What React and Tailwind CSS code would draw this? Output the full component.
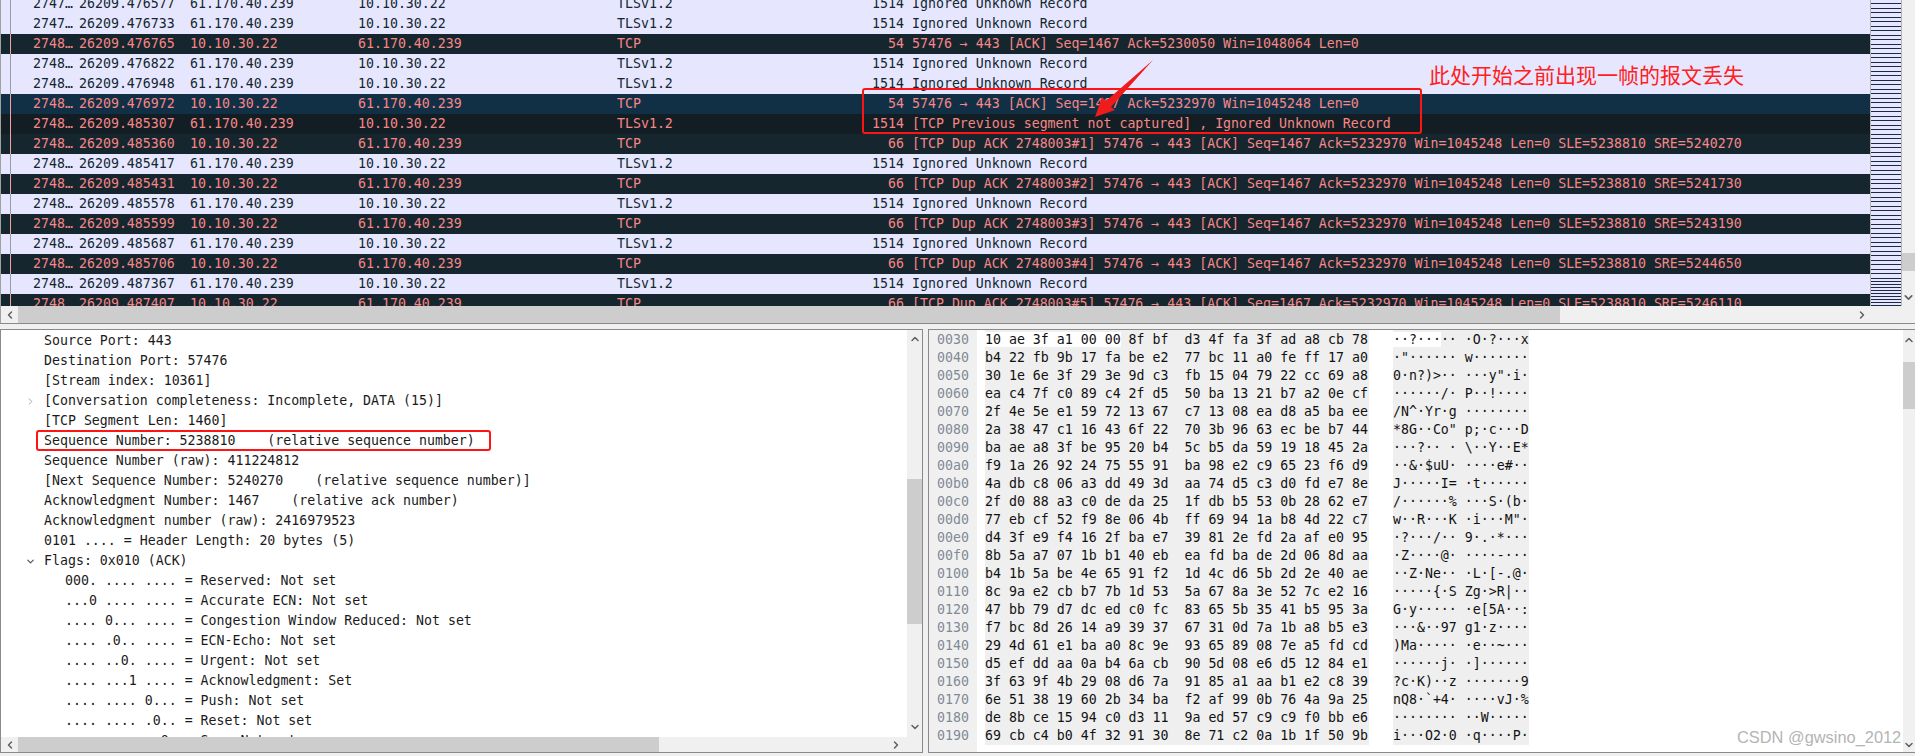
import { ChevronLeft, ChevronRight, ChevronUp, ChevronDown } from 'lucide-react';

const IGN = 'Ignored Unknown Record';
const dup = (n, sre) => `[TCP Dup ACK 2748003#${n}] 57476 → 443 [ACK] Seq=1467 Ack=5232970 Win=1045248 Len=0 SLE=5238810 SRE=${sre}`;
const IN = ['61.170.40.239', '10.10.30.22', 'TLSv1.2', '1514'];
const OUT = ['10.10.30.22', '61.170.40.239', 'TCP'];

const packets = [
  { no: '2747…', time: '26209.476577', p: IN, info: IGN },
  { no: '2747…', time: '26209.476733', p: IN, info: IGN },
  { no: '2748…', time: '26209.476765', p: OUT, len: '54', info: '57476 → 443 [ACK] Seq=1467 Ack=5230050 Win=1048064 Len=0' },
  { no: '2748…', time: '26209.476822', p: IN, info: IGN },
  { no: '2748…', time: '26209.476948', p: IN, info: IGN },
  { no: '2748…', time: '26209.476972', p: OUT, len: '54', info: '57476 → 443 [ACK] Seq=1467 Ack=5232970 Win=1045248 Len=0', bg: 'bg-[#123045]' },
  { no: '2748…', time: '26209.485307', p: IN, info: '[TCP Previous segment not captured] , Ignored Unknown Record', bad: true, bg: 'bg-[#121e24]' },
  { no: '2748…', time: '26209.485360', p: OUT, len: '66', info: dup(1, 5240270) },
  { no: '2748…', time: '26209.485417', p: IN, info: IGN },
  { no: '2748…', time: '26209.485431', p: OUT, len: '66', info: dup(2, 5241730) },
  { no: '2748…', time: '26209.485578', p: IN, info: IGN },
  { no: '2748…', time: '26209.485599', p: OUT, len: '66', info: dup(3, 5243190) },
  { no: '2748…', time: '26209.485687', p: IN, info: IGN },
  { no: '2748…', time: '26209.485706', p: OUT, len: '66', info: dup(4, 5244650) },
  { no: '2748…', time: '26209.487367', p: IN, info: IGN },
  { no: '2748…', time: '26209.487407', p: OUT, len: '66', info: dup(5, 5246110) },
];

const tree = [
  { t: 'Source Port: 443' },
  { t: 'Destination Port: 57476' },
  { t: '[Stream index: 10361]' },
  { t: '[Conversation completeness: Incomplete, DATA (15)]', arrow: 'right' },
  { t: '[TCP Segment Len: 1460]' },
  { t: 'Sequence Number: 5238810    (relative sequence number)' },
  { t: 'Sequence Number (raw): 411224812' },
  { t: '[Next Sequence Number: 5240270    (relative sequence number)]' },
  { t: 'Acknowledgment Number: 1467    (relative ack number)' },
  { t: 'Acknowledgment number (raw): 2416979523' },
  { t: '0101 .... = Header Length: 20 bytes (5)' },
  { t: 'Flags: 0x010 (ACK)', arrow: 'down' },
  { t: '000. .... .... = Reserved: Not set', sub: true },
  { t: '...0 .... .... = Accurate ECN: Not set', sub: true },
  { t: '.... 0... .... = Congestion Window Reduced: Not set', sub: true },
  { t: '.... .0.. .... = ECN-Echo: Not set', sub: true },
  { t: '.... ..0. .... = Urgent: Not set', sub: true },
  { t: '.... ...1 .... = Acknowledgment: Set', sub: true },
  { t: '.... .... 0... = Push: Not set', sub: true },
  { t: '.... .... .0.. = Reset: Not set', sub: true },
  { t: '.... .... ..0. = Syn: Not set', sub: true },
];

const hex = `10 ae 3f a1 00 00 8f bf d3 4f fa 3f ad a8 cb 78
b4 22 fb 9b 17 fa be e2 77 bc 11 a0 fe ff 17 a0
30 1e 6e 3f 29 3e 9d c3 fb 15 04 79 22 cc 69 a8
ea c4 7f c0 89 c4 2f d5 50 ba 13 21 b7 a2 0e cf
2f 4e 5e e1 59 72 13 67 c7 13 08 ea d8 a5 ba ee
2a 38 47 c1 16 43 6f 22 70 3b 96 63 ec be b7 44
ba ae a8 3f be 95 20 b4 5c b5 da 59 19 18 45 2a
f9 1a 26 92 24 75 55 91 ba 98 e2 c9 65 23 f6 d9
4a db c8 06 a3 dd 49 3d aa 74 d5 c3 d0 fd e7 8e
2f d0 88 a3 c0 de da 25 1f db b5 53 0b 28 62 e7
77 eb cf 52 f9 8e 06 4b ff 69 94 1a b8 4d 22 c7
d4 3f e9 f4 16 2f ba e7 39 81 2e fd 2a af e0 95
8b 5a a7 07 1b b1 40 eb ea fd ba de 2d 06 8d aa
b4 1b 5a be 4e 65 91 f2 1d 4c d6 5b 2d 2e 40 ae
8c 9a e2 cb b7 7b 1d 53 5a 67 8a 3e 52 7c e2 16
47 bb 79 d7 dc ed c0 fc 83 65 5b 35 41 b5 95 3a
f7 bc 8d 26 14 a9 39 37 67 31 0d 7a 1b a8 b5 e3
29 4d 61 e1 ba a0 8c 9e 93 65 89 08 7e a5 fd cd
d5 ef dd aa 0a b4 6a cb 90 5d 08 e6 d5 12 84 e1
3f 63 9f 4b 29 08 d6 7a 91 85 a1 aa b1 e2 c8 39
6e 51 38 19 60 2b 34 ba f2 af 99 0b 76 4a 9a 25
de 8b ce 15 94 c0 d3 11 9a ed 57 c9 c9 f0 bb e6
69 cb c4 b0 4f 32 91 30 8e 71 c2 0a 1b 1f 50 9b`.split('\n');

const toAscii = (bytes) =>
  bytes
    .map((b) => {
      const c = parseInt(b, 16);
      return c >= 32 && c < 127 ? String.fromCharCode(c) : '·';
    })
    .join('');

function PacketRow({ row }) {
  const [src, dst, proto, defLen] = row.p;
  const dark = row.p === OUT || row.bad;
  const bg = row.bg || (dark ? 'bg-[#15262e]' : 'bg-[#e6e6ff]');
  return (
    <div className={`flex h-5 leading-5 whitespace-pre ${bg} ${dark ? 'text-[#f78787]' : 'text-[#12272e]'}`}>
      <div className="w-[9px]" />
      <div className={`w-px ${dark ? 'bg-[#f7a0a0]' : 'bg-[#9a9aa8]'}`} />
      <div className="w-[22px]" />
      <div className="w-[46px]">{row.no}</div>
      <div className="w-[111px]">{row.time}</div>
      <div className="w-[168px]">{src}</div>
      <div className="w-[259px]">{dst}</div>
      <div className="w-[255px]">{proto}</div>
      <div className="w-[32px] text-right">{row.len || defLen}</div>
      <div className="ml-2">{row.info}</div>
    </div>
  );
}

function TreeRow({ row }) {
  return (
    <div className="flex h-5 items-center leading-5 whitespace-pre text-[#1a1a1a]">
      <div className="flex w-[43px] shrink-0 justify-end pr-2">
        {row.arrow === 'right' && <ChevronRight size={11} strokeWidth={2} className="text-[#a0a0a0]" />}
        {row.arrow === 'down' && <ChevronDown size={11} strokeWidth={2.5} className="text-[#505050]" />}
      </div>
      <div className={row.sub ? 'pl-[21px]' : ''}>{row.t}</div>
    </div>
  );
}

function HexRows() {
  return (
    <div className="flex min-h-full text-[#111] leading-[18px] whitespace-pre">
      <div className="w-[48px] bg-[#f0f0f0] pl-2 pt-px text-[#7f8a96]">
        {hex.map((_, i) => (
          <div key={i} className="h-[18px]">{(0x30 + i * 16).toString(16).padStart(4, '0')}</div>
        ))}
      </div>
      <div className="ml-2 h-fit w-[384px] bg-[#efefef] pt-px">
        {hex.map((line, i) => {
          const b = line.split(' ');
          const a = b.slice(0, 8).join(' ');
          const c = b.slice(8).join(' ');
          if (i === 0) {
            return (
              <div key={i} className="h-[18px]">
                <span className="bg-white">{b.slice(0, 6).join(' ')}</span> {b.slice(6, 8).join(' ')}  {c}
              </div>
            );
          }
          return <div key={i} className="h-[18px]">{a}  {c}</div>;
        })}
      </div>
      <div className="ml-6 h-fit w-[136px] bg-[#efefef] pt-px">
        {hex.map((line, i) => {
          const b = line.split(' ');
          if (i === 0) {
            return (
              <div key={i} className="h-[18px]">
                <span className="bg-white">{toAscii(b.slice(0, 6))}</span>{toAscii(b.slice(6, 8))} {toAscii(b.slice(8))}
              </div>
            );
          }
          return <div key={i} className="h-[18px]">{toAscii(b.slice(0, 8))} {toAscii(b.slice(8))}</div>;
        })}
      </div>
    </div>
  );
}

export default function App() {
  return (
    <div className="relative flex h-[756px] w-[1915px] flex-col overflow-hidden bg-[#f0f0f0] font-['DejaVu_Sans_Mono','Liberation_Mono',monospace] text-[13.25px]">
      {/* packet list */}
      <div className="flex h-[306px] shrink-0">
        <div className="w-[1870px] overflow-hidden border-l border-[#a0a0a0]">
          <div className="-mt-[6px]">
            {packets.map((row) => (
              <PacketRow key={row.time} row={row} />
            ))}
          </div>
        </div>
        <div className="flex w-[32px] flex-col border-x border-[#b4b4b4] bg-[#e6e6ff]">
          <div className="h-[276px] bg-[repeating-linear-gradient(to_bottom,#e6e6ff_0,#e6e6ff_3px,#1b2a45_3px,#1b2a45_4px,#e6e6ff_4px,#e6e6ff_8px,#1b2a45_8px,#1b2a45_9px)]" />
          <div className="flex-1 bg-[repeating-linear-gradient(to_bottom,#e6e6ff_0,#e6e6ff_2px,#1b2a45_2px,#1b2a45_3px)]" />
        </div>
        <div className="flex w-[13px] flex-col items-center pt-[253px]">
          <div className="h-[18px] w-full bg-[#cdcdcd]" />
          <ChevronDown size={13} strokeWidth={3} className="mt-[20px] text-[#606060]" />
        </div>
      </div>

      <div className="flex h-[17px] shrink-0 items-center border-l border-[#a0a0a0]">
        <div className="flex w-[17px] justify-center">
          <ChevronLeft size={12} strokeWidth={3} className="text-[#606060]" />
        </div>
        <div className="h-full w-[1542px] bg-[#cdcdcd]" />
        <div className="ml-[296px] flex w-[12px] justify-center">
          <ChevronRight size={12} strokeWidth={3} className="text-[#606060]" />
        </div>
      </div>

      <div className="h-px shrink-0 bg-[#8a8a8a]" />
      <div className="h-[5px] shrink-0" />

      {/* details + bytes */}
      <div className="flex h-[424px] shrink-0">
        <div className="flex w-[923px] flex-col border border-[#8a8a8a] bg-white">
          <div className="flex h-[407px]">
            <div className="flex-1 overflow-hidden pt-px">
              {tree.map((row) => (
                <TreeRow key={row.t} row={row} />
              ))}
            </div>
            <div className="flex w-[15px] flex-col items-center bg-[#f0f0f0] pt-[3px]">
              <ChevronUp size={12} strokeWidth={3} className="text-[#606060]" />
              <div className="mt-[134px] h-[145px] w-full bg-[#cdcdcd]" />
              <ChevronDown size={12} strokeWidth={3} className="mt-[97px] text-[#606060]" />
            </div>
          </div>
          <div className="flex h-[15px] items-center bg-[#f0f0f0]">
            <div className="flex w-[17px] justify-center">
              <ChevronLeft size={12} strokeWidth={3} className="text-[#606060]" />
            </div>
            <div className="h-full w-[641px] bg-[#cdcdcd]" />
            <div className="ml-[231px] flex w-[12px] justify-center">
              <ChevronRight size={12} strokeWidth={3} className="text-[#606060]" />
            </div>
          </div>
        </div>

        <div className="ml-[5px] flex flex-1 border-y border-l border-[#8a8a8a] bg-white">
          <div className="flex-1 overflow-hidden">
            <HexRows />
          </div>
          <div className="flex w-[12px] flex-col items-center bg-[#f0f0f0] pt-[4px]">
            <ChevronUp size={12} strokeWidth={3} className="text-[#606060]" />
            <div className="mt-[16px] h-[47px] w-full bg-[#cdcdcd]" />
            <ChevronDown size={12} strokeWidth={3} className="mt-[330px] text-[#606060]" />
          </div>
        </div>
      </div>

      {/* red annotations pasted on top */}
      <div className="absolute left-[862px] top-[88px] h-[46px] w-[560px] rounded-[3px] border-2 border-[#ff1414]" />
      <div className="absolute left-[36px] top-[430px] h-[21px] w-[455px] rounded-[3px] border-2 border-[#ff1414]" />
      <svg className="absolute left-[1085px] top-[55px]" width="75" height="70" viewBox="1085 55 75 70">
        <path d="M1153 60 L1111 107 L1115 110 L1095 117 L1102 97 L1106 101 Z" fill="#f01c1c" />
      </svg>
      <div className="absolute left-[1429px] top-[59px] font-['Noto_Sans_CJK_SC',sans-serif] text-[21px] leading-[30px] whitespace-pre text-[#ff2020]">
        此处开始之前出现一帧的报文丢失
      </div>
      <div className="absolute left-[1737px] top-[726px] font-['Liberation_Sans',sans-serif] text-[16.4px] leading-[22px] whitespace-pre text-[#b4b4b4]">
        CSDN @gwsino_2012
      </div>
    </div>
  );
}
